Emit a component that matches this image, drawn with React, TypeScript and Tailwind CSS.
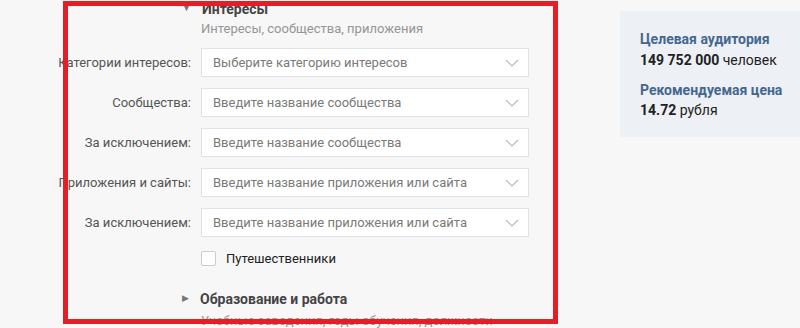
import React from "react";

const Chevron = () => (
  <svg width="14" height="8" viewBox="0 0 14 8" fill="none">
    <path d="M1 1l6 6 6-6" stroke="#b4bac3" strokeWidth="1.2" />
  </svg>
);

const rows = [
  { label: "Категории интересов:", ph: "Выберите категорию интересов" },
  { label: "Сообщества:", ph: "Введите название сообщества" },
  { label: "За исключением:", ph: "Введите название сообщества" },
  { label: "Приложения и сайты:", ph: "Введите название приложения или сайта" },
  { label: "За исключением:", ph: "Введите название приложения или сайта" },
];

export default function App() {
  return (
    <div
      className="relative w-[800px] h-[328px] overflow-hidden bg-[#f7f7f7]"
      style={{ fontFamily: "Roboto, 'Open Sans', sans-serif" }}
    >
      <div className="flex">
        <div className="w-[620px] shrink-0">
          <div className="pl-[182px] pt-[1px] flex items-center gap-[11px] h-[16px]">
            <span className="text-[9px] text-[#777] leading-none">▼</span>
            <span className="text-[14px] font-bold text-[#444] leading-none">Интересы</span>
          </div>
          <div className="pl-[201px] mt-[5px] text-[13px] text-[#959595] leading-[16px]">
            Интересы, сообщества, приложения
          </div>
          <div className="mt-[11px] flex flex-col gap-[11px]">
            {rows.map((r, i) => (
              <div key={i} className="flex items-center gap-[10px]">
                <div className="w-[191px] text-right text-[13px] text-[#555] whitespace-nowrap">
                  {r.label}
                </div>
                <div className="w-[328px] h-[29px] bg-white border border-[#dfe2e7] flex items-center justify-between pl-[11px] pr-[9px]">
                  <span className="text-[13px] text-[#7a7a7a]">{r.ph}</span>
                  <Chevron />
                </div>
              </div>
            ))}
          </div>
          <div className="pl-[201px] mt-[12px] flex items-center gap-[10px]">
            <div className="w-[15px] h-[15px] bg-white border border-[#c9cdd3] rounded-[2px]" />
            <span className="text-[13px] text-[#222]">Путешественники</span>
          </div>
          <div className="pl-[182px] mt-[21px] flex items-center gap-[11px] h-[18px]">
            <span className="text-[9px] text-[#777] leading-none">▶</span>
            <span className="text-[14px] font-bold text-[#444] leading-none">Образование и работа</span>
          </div>
          <div className="pl-[201px] mt-[5px] text-[13px] text-[#959595] leading-[16px] whitespace-nowrap">
            Учебные заведения, годы обучения, должности
          </div>
        </div>
        <div className="mt-[11px] w-[180px] h-[126px] bg-[#edf0f4] pl-[20px] pt-[20px]">
          <div className="text-[14px] font-bold text-[#45678f] leading-[17px]">Целевая аудитория</div>
          <div className="text-[14px] text-[#222] leading-[17px] mt-[4px]">
            <b>149 752 000</b> человек
          </div>
          <div className="text-[14px] font-bold text-[#45678f] leading-[17px] mt-[13px]">Рекомендуемая цена</div>
          <div className="text-[14px] text-[#222] leading-[17px] mt-[3px]">
            <b>14.72</b> рубля
          </div>
        </div>
      </div>
      <div className="absolute left-[63px] top-[1px] w-[495px] h-[323px] border-[5px] border-[#e31e26] pointer-events-none" />
    </div>
  );
}
